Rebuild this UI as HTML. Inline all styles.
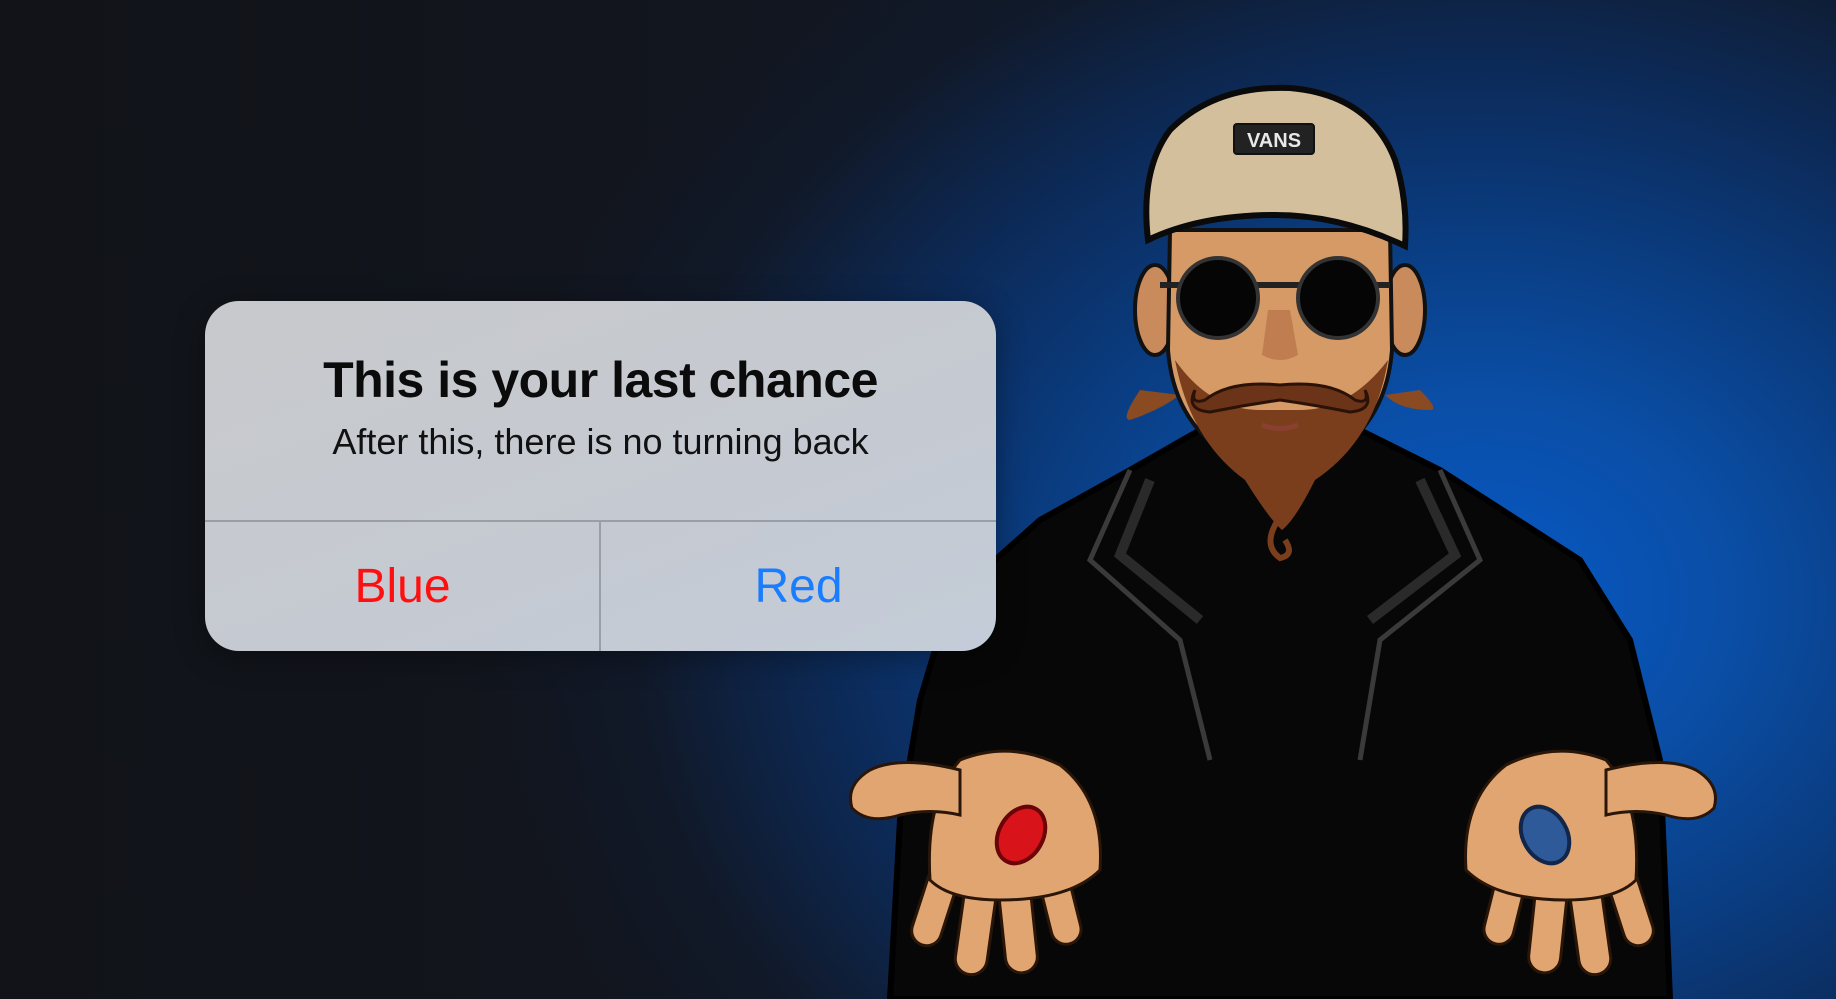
<!DOCTYPE html>
<html><head><meta charset="utf-8">
<style>
html,body{margin:0;padding:0;width:1836px;height:999px;overflow:hidden;background:#121419;}
.bg{position:absolute;inset:0;background:
radial-gradient(ellipse 1000px 820px at 1480px 600px,#0759c6 0%,#0a4ea6 25%,#0a3c80 45%,#0c2a58 65%,rgba(16,26,44,0.7) 85%,rgba(18,20,25,0) 100%),
linear-gradient(90deg,#111318 0%,#121620 45%,#0f1c33 100%);}
svg{position:absolute;left:0;top:0}
.dlg{position:absolute;left:205px;top:301px;width:791px;height:350px;border-radius:34px;
background:linear-gradient(160deg,#c8c9cc 0%,#c5cad2 60%,#c3ccd8 100%);overflow:hidden;
font-family:"Liberation Sans",sans-serif;box-shadow:0 6px 30px rgba(0,0,0,.35)}
.t{position:absolute;left:0;right:0;top:50px;text-align:center;font-size:50px;font-weight:bold;color:#0b0b0b;letter-spacing:-0.5px}
.s{position:absolute;left:0;right:0;top:120px;text-align:center;font-size:36px;color:#111}
.hl{position:absolute;left:0;right:0;top:219px;height:2px;background:#9a9ea5}
.vl{position:absolute;left:394px;top:220px;width:2px;height:130px;background:#9a9ea5}
.b{position:absolute;top:258px;font-size:48px;text-align:center;width:395px}
</style></head><body>
<div class="bg"></div>
<svg width="1836" height="999" viewBox="0 0 1836 999">
<!-- coat -->
<path d="M1040 520 L1130 470 L1200 430 L1280 480 L1360 430 L1440 470 L1580 560 L1630 640 L1660 760 L1670 999 L890 999 L900 820 L920 700 L950 600 Z" fill="#070707" stroke="#000" stroke-width="6"/>
<path d="M1130 470 L1090 560 L1180 640 L1210 760 M1440 470 L1480 560 L1380 640 L1360 760" fill="none" stroke="#3a3a3a" stroke-width="5"/>
<path d="M1150 480 L1120 555 L1200 620 M1420 480 L1455 555 L1370 620" fill="none" stroke="#2a2a2a" stroke-width="10"/>
<!-- hair sides -->
<path d="M1140 390 Q1120 420 1130 420 Q1160 410 1180 395 Z M1420 390 Q1440 410 1430 410 Q1400 410 1385 395 Z" fill="#8a4a22"/>
<!-- ears -->
<ellipse cx="1155" cy="310" rx="20" ry="45" fill="#c98a5c" stroke="#111" stroke-width="4"/>
<ellipse cx="1405" cy="310" rx="20" ry="45" fill="#c98a5c" stroke="#111" stroke-width="4"/>
<!-- face -->
<path d="M1170 230 L1390 230 L1392 350 Q1385 440 1300 470 L1260 470 Q1175 440 1168 350 Z" fill="#d69a66" stroke="#111" stroke-width="4"/>
<!-- beard -->
<path d="M1175 360 Q1190 440 1245 480 Q1270 520 1282 530 Q1295 520 1315 480 Q1375 440 1388 360 Q1350 410 1300 410 L1260 410 Q1210 410 1175 360 Z" fill="#7a3e1c"/>
<path d="M1278 520 Q1262 545 1280 558 Q1295 555 1285 540" fill="none" stroke="#7a3e1c" stroke-width="6"/>
<!-- mustache -->
<path d="M1280 385 Q1230 380 1205 400 Q1190 405 1195 390 Q1185 410 1210 412 Q1245 405 1280 400 Q1315 405 1350 412 Q1375 410 1365 390 Q1370 405 1355 400 Q1330 380 1280 385 Z" fill="#6b3418" stroke="#2a1208" stroke-width="3"/>
<path d="M1262 425 Q1280 432 1298 425" stroke="#8a4030" stroke-width="5" fill="none"/>
<!-- nose -->
<path d="M1268 310 L1262 355 Q1280 365 1298 355 L1290 310" fill="#c07e50"/>
<!-- glasses -->
<path d="M1160 285 L1390 285" stroke="#222" stroke-width="6"/>
<circle cx="1218" cy="298" r="40" fill="#050505" stroke="#333" stroke-width="4"/>
<circle cx="1338" cy="298" r="40" fill="#050505" stroke="#333" stroke-width="4"/>
<!-- cap -->
<path d="M1148 240 Q1140 170 1170 130 Q1215 85 1290 88 Q1370 95 1395 160 Q1408 200 1405 246 Q1340 215 1275 215 Q1200 215 1148 240 Z" fill="#d4bf9d" stroke="#0a0a0a" stroke-width="6"/>
<rect x="1234" y="124" width="80" height="30" rx="3" fill="#222" stroke="#111" stroke-width="2"/>
<text x="1274" y="147" text-anchor="middle" font-family="Liberation Sans,sans-serif" font-weight="bold" font-size="20" fill="#e8e8e8">VANS</text>
<!-- left hand -->
<g fill="#e0a571" stroke="#2a1608" stroke-width="3">
<rect x="920" y="865" width="30" height="82" rx="15" transform="rotate(18 935 905)"/>
<rect x="960" y="880" width="32" height="95" rx="16" transform="rotate(8 976 925)"/>
<rect x="1002" y="878" width="32" height="95" rx="16" transform="rotate(-6 1018 925)"/>
<rect x="1045" y="865" width="30" height="80" rx="15" transform="rotate(-14 1060 905)"/>
<path d="M930 880 Q925 800 960 760 Q1010 740 1060 765 Q1105 800 1100 870 Q1070 900 1000 900 Q950 900 930 880 Z"/>
<path d="M960 770 Q900 755 870 770 Q845 785 852 808 Q868 825 900 815 Q930 808 960 815 Z"/>
</g>
<ellipse cx="1021" cy="835" rx="22" ry="30" transform="rotate(30 1021 835)" fill="#d8141a" stroke="#6a0408" stroke-width="4"/>
<!-- right hand -->
<g fill="#e0a571" stroke="#2a1608" stroke-width="3">
<rect x="1615" y="865" width="30" height="82" rx="15" transform="rotate(-18 1630 905)"/>
<rect x="1574" y="880" width="32" height="95" rx="16" transform="rotate(-8 1590 925)"/>
<rect x="1532" y="878" width="32" height="95" rx="16" transform="rotate(6 1548 925)"/>
<rect x="1490" y="865" width="30" height="80" rx="15" transform="rotate(14 1505 905)"/>
<path d="M1636 880 Q1641 800 1606 760 Q1556 740 1506 765 Q1461 800 1466 870 Q1496 900 1566 900 Q1616 900 1636 880 Z"/>
<path d="M1606 770 Q1666 755 1696 770 Q1721 785 1714 808 Q1698 825 1666 815 Q1636 808 1606 815 Z"/>
</g>
<ellipse cx="1545" cy="835" rx="22" ry="30" transform="rotate(-30 1545 835)" fill="#2f5a9a" stroke="#12264a" stroke-width="4"/>
</svg>
<div class="dlg">
<div class="t">This is your last chance</div>
<div class="s">After this, there is no turning back</div>
<div class="hl"></div><div class="vl"></div>
<div class="b" style="left:0;color:#ff1010">Blue</div>
<div class="b" style="left:396px;color:#1a7cff">Red</div>
</div>
</body></html>
